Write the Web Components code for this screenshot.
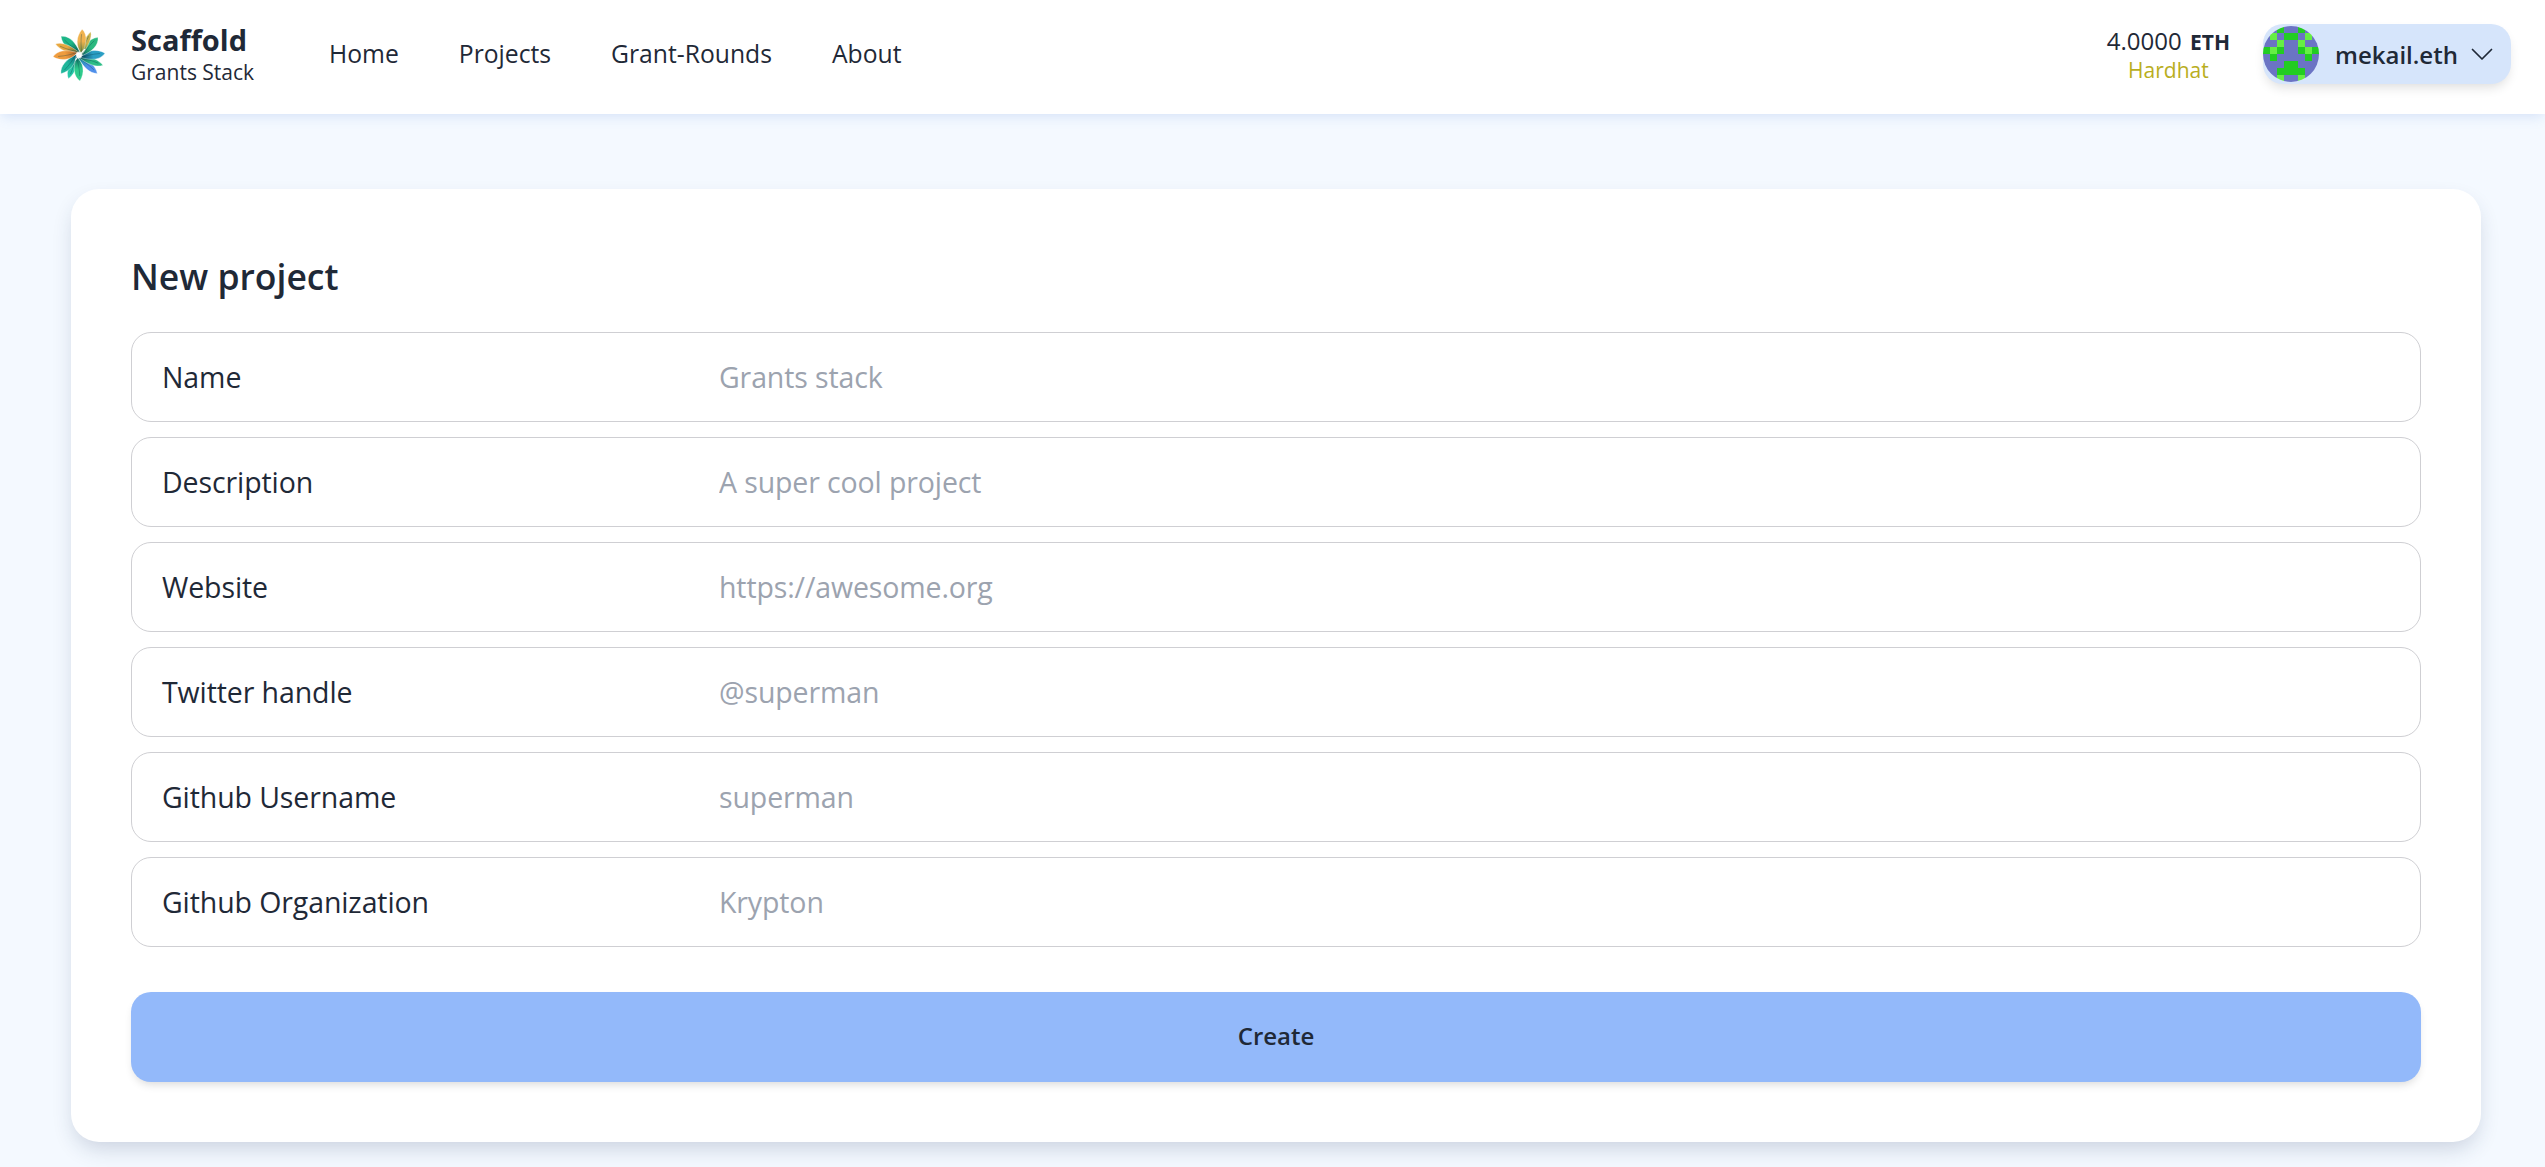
<!DOCTYPE html>
<html><head><meta charset="utf-8">
<style>
html,body{margin:0;padding:0;background:#f4f9ff;}
body{font-family:"Open Sans","Noto Sans",sans-serif;color:#1f2937;height:1167px;overflow:hidden;}
</style></head><body>
<app-header></app-header>
<main-area>
<project-form heading="New project">
<form-row label="Name" placeholder="Grants stack"></form-row>
<form-row label="Description" placeholder="A super cool project"></form-row>
<form-row label="Website" placeholder="https://awesome.org"></form-row>
<form-row label="Twitter handle" placeholder="@superman"></form-row>
<form-row label="Github Username" placeholder="superman"></form-row>
<form-row label="Github Organization" placeholder="Krypton"></form-row>
</project-form>
</main-area>
<script>
function petals(){
  const leaves=[
    [204,'#25c7a6','#0c5f70',4.5],[224,'#1fb69a','#0c6a80',5],[178,'#2fcb8c','#0b6a62',5.5],
    [135,'#4f8fea','#12989a',4.5],[113,'#2cbd86','#0c6f66',4],[86,'#2a9ec4','#08495f',5.5],
    [47,'#2bb97f','#0b6a60',5.5],[27,'#cbb24a','#3f8a52',3.2],[7,'#f0b24e','#6f8c3c',5.5],
    [316,'#1cb687','#0a5f52',5.5],[295,'#e8a840','#5d6f30',4],[266,'#ef9c3e','#b9682a',5.5]
  ];
  let defs='',p='';
  leaves.forEach((l,i)=>{
    const [a,c1,c2,w]=l;
    defs+=`<linearGradient id="g${i}" gradientUnits="userSpaceOnUse" x1="26" y1="0" x2="28" y2="24"><stop offset="0" stop-color="${c1}"/><stop offset=".5" stop-color="${c1}"/><stop offset="1" stop-color="${c2}"/></linearGradient>`;
    p+=`<g transform="rotate(${a} 26 26)"><path d="M26 0 C${26+w+1} 5 ${26+w+1} 14 28.5 24.5 C${26-w+1} 18 ${26-w} 8 26 0Z" fill="url(#g${i})" stroke="#fff" stroke-width=".35"/><path d="M28.5 23.5 C27 18 26 12 26 5" fill="none" stroke="#083f4c" stroke-opacity=".4" stroke-width=".8"/></g>`;
  });
  return `<svg width="52" height="52" viewBox="0 0 52 52" aria-hidden="true"><defs>${defs}</defs>${p}<path d="M22.5 31C25 27.5 28 24.5 31.5 20.5" stroke="#f4fbf8" stroke-width="1.2" fill="none" stroke-linecap="round"/></svg>`;
}
function blockie(){
  const grid=["bbgbbgbb","blbggblb","bblbblbb","glgbbglg","bgbbbbgb","bbbggbbb","bbggggbb","bblbblbb"];
  const m={b:'#6b74c4',g:'#22cc22',l:'#66ee44'};
  let r='';
  grid.forEach((row,y)=>[...row].forEach((c,x)=>{r+=`<rect x="${x}" y="${y}" width="1.02" height="1.02" fill="${m[c]}"/>`;}));
  return `<svg width="56" height="56" viewBox="0 0 8 8" style="border-radius:50%;display:block;flex:none" aria-hidden="true">${r}</svg>`;
}
const def=(name,html)=>{
  customElements.define(name,class extends HTMLElement{
    constructor(){super();this.attachShadow({mode:'open'}).innerHTML=html(this);}
  });
};
def('brand-logo',()=>`<style>:host{display:flex;align-items:center;gap:26px;width:202px;flex:none}
.t{display:flex;flex-direction:column;white-space:nowrap}
b{font-size:29px;font-weight:700;line-height:34px;color:#1f2937;margin-bottom:2px}
span{font-size:21px;line-height:26px;color:#1f2937}
svg{display:block;flex:none;margin-top:2px}</style>${petals()}<div class="t"><b>Scaffold</b><span>Grants Stack</span></div>`);
def('nav-link',()=>`<style>:host{display:block;font-size:24.7px;line-height:32px;color:#1f2937;white-space:nowrap}</style><slot></slot>`);
def('eth-balance',()=>`<style>:host{display:flex;flex-direction:column;align-items:center;font-size:24px}
b{font-size:21px;font-weight:700;margin-left:2px}
.n{font-size:21px;line-height:26px;color:#b9ae1e}
.v{line-height:30px}
</style><div class="v">4.0000 <b>ETH</b></div><div class="n">Hardhat</div>`);
def('wallet-pill',()=>`<style>:host{display:flex;align-items:center;height:60px;width:248px;box-sizing:border-box;background:#d6e5fb;border-radius:20px;box-shadow:0 6px 12px -3px rgba(0,0,0,.14)}
span{font-size:24px;font-weight:600;margin-left:16px;color:#1f2937}
.c{margin-left:12px;display:block}
</style>${blockie()}<span>mekail.eth</span><svg class="c" width="24" height="24" viewBox="0 0 24 24" fill="none" stroke="#1f2937" stroke-width="1.7" stroke-linecap="round" stroke-linejoin="round"><path d="M2.5 7.5l9.5 9.5 9.5-9.5"/></svg>`);
def('app-header',()=>`<style>:host{display:flex;align-items:center;height:114px;box-sizing:border-box;background:#fff;padding:0 34px 6px 53px;box-shadow:0 4px 12px -2px rgba(96,140,220,.22);position:relative}
nav{display:flex;gap:60px;margin-left:74px}
.r{margin-left:auto;display:flex;align-items:center;gap:33px}
</style><brand-logo></brand-logo><nav><nav-link>Home</nav-link><nav-link>Projects</nav-link><nav-link>Grant-Rounds</nav-link><nav-link>About</nav-link></nav>
<div class="r"><eth-balance></eth-balance><wallet-pill></wallet-pill></div>`);
def('main-area',()=>`<style>:host{display:block;padding:75px 64px 0 71px}</style><slot></slot>`);
def('project-form',(el)=>`<style>:host{display:block;background:#fff;border-radius:28px;padding:63px 60px 60px;height:953px;box-sizing:border-box;box-shadow:0 10px 22px -4px rgba(30,50,90,.2)}
h2{margin:0 0 31px;font-size:35.5px;font-weight:600;line-height:49px;color:#1f2937}
.rows{display:flex;flex-direction:column;gap:15px}
button{display:block;width:100%;height:90px;margin-top:45px;border:0;border-radius:20px;background:#93b9fa;font:600 24px "Open Sans","Noto Sans",sans-serif;color:#1f2937;box-shadow:0 5px 10px -3px rgba(0,0,0,.16);padding:0 0 3px}
</style><h2>${el.getAttribute('heading')}</h2><div class="rows"><slot></slot></div><button>Create</button>`);
def('form-row',(el)=>`<style>:host{display:flex;align-items:center;height:90px;box-sizing:border-box;border:1px solid #cfcfd3;border-radius:20px;padding:0 30px;font-size:28.5px}
label{width:557px;flex:none;color:#1f2937;letter-spacing:-.1px}
input{flex:1;border:0;outline:0;background:none;font:inherit;padding:0;color:#1f2937;letter-spacing:-.12px}
input::placeholder{color:#9ca3af;opacity:1}
</style><label>${el.getAttribute('label')}</label><input placeholder="${el.getAttribute('placeholder')}">`);
</script>
</body></html>
